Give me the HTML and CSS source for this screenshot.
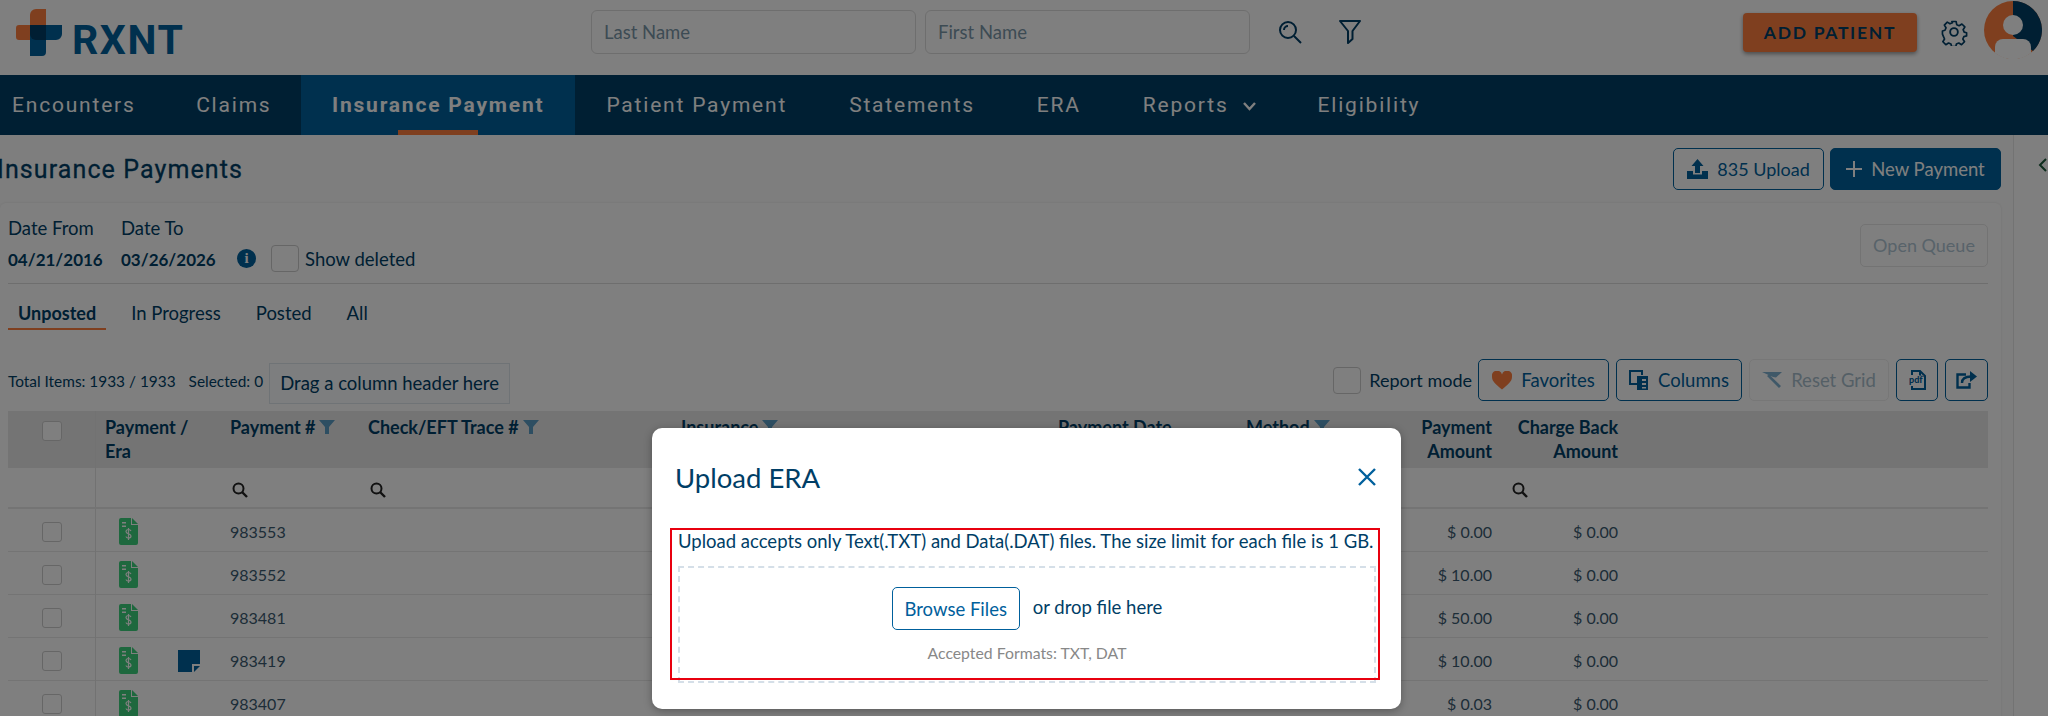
FILE: index.html
```html
<!DOCTYPE html>
<html lang="en">

<head>
    <meta name="viewport" content="width=device-width, initial-scale=1.0">
    <title>Insurance Payments</title>
    <link rel="stylesheet" href="styles.css">
</head>

<body>
    <svg class="defs" width="0" height="0">
        <symbol id="era-doc" viewBox="0 0 19 27">
            <path d="M2 0h10v7h7v18a2 2 0 0 1-2 2H2a2 2 0 0 1-2-2V2a2 2 0 0 1 2-2z" fill="#3dd07c" />
            <path d="M13 0l6 6h-6z" fill="#3dd07c" />
            <path d="M3 4h4v1.500H3zM3 7.500h4V9H3z" fill="#fff" />
            <path d="M12 13c-.5-1-1.500-1.500-2.500-1.500S7 12 7 13.500c0 3 5 1.800 5 4.600 0 1.400-1.200 2-2.500 2S7.200 19.500 7 18.500M9.500 10v12" fill="none" stroke="#fff" stroke-width="1.200" />
        </symbol>
        <symbol id="small-search" viewBox="0 0 16 16">
            <circle cx="6.500" cy="6.500" r="5" fill="none" stroke="#222" stroke-width="2" />
            <path d="M10 10l5 5" stroke="#222" stroke-width="2.400" />
        </symbol>
        <symbol id="col-filter" viewBox="0 0 16 14">
            <path d="M0 0h16L10 7v7H6V7z" fill="#5b9cc4" />
        </symbol>
    </svg>

    <div class="header">
        <div class="logo">
            <svg width="46" height="47" viewBox="0 0 46 47">
                <path d="M14 6a6 6 0 0 1 6-6h10v31H14V31H3a3 3 0 0 1-3-3v-9a3 3 0 0 1 3-3h11z" fill="#ff7f3f" />
                <path d="M14 16h32v9a6 6 0 0 1-6 6H30v12a4 4 0 0 1-4 4H14z" fill="#00609c" />
                <path d="M14 16h16v15H20a6 6 0 0 1-6-6z" fill="#003c66" />
            </svg>
            <span class="logo-text">RXNT</span>
        </div>
        <div class="patient-search">
            <input class="name-input" placeholder="Last Name">
            <input class="name-input" placeholder="First Name">
            <svg class="search-icon" width="24" height="24" viewBox="0 0 24 24" fill="none" stroke="#003e66" stroke-width="2">
                <circle cx="10" cy="10" r="8" />
                <path d="M16 16l7 7M6 10a4 4 0 0 1 4-4" />
            </svg>
            <svg class="filter-icon" width="22" height="24" viewBox="0 0 22 24" fill="none" stroke="#003e66" stroke-width="2">
                <path d="M1 1h20l-7.500 10v8L9 23V11z" stroke-linejoin="round" />
            </svg>
        </div>
        <button class="add-patient">ADD PATIENT</button>
        <svg class="gear" width="28" height="28" viewBox="0 0 24 24" fill="none" stroke="#003e66" stroke-width="1.600">
            <circle cx="12" cy="12" r="3.300" />
            <path d="M10 2h4l.6 3 2.300 1 2.600-1.600 2.800 2.800-1.600 2.600 1 2.300 2.300.6v3l-2.600.7-1 2.300 1.600 2.600-2.800 2.800-2.600-1.600-2.300 1-.6 2.400h-4l-.6-2.400-2.300-1-2.600 1.600-2.800-2.800 1.600-2.600-1-2.300L1 14v-3l2.400-.7 1-2.300-1.600-2.600 2.800-2.800 2.600 1.600 2.300-1z" transform="translate(1.200 1.200) scale(.9)" stroke-linejoin="round" />
        </svg>
        <svg class="avatar" width="58" height="58" viewBox="0 0 58 58">
            <circle cx="29" cy="29" r="29" fill="#ff7f3f" />
            <path d="M29 0a29 29 0 0 1 20 50L29 35z" fill="#003e66" />
            <circle cx="29" cy="24" r="10" fill="#fff" />
            <path d="M11 52V46a8 8 0 0 1 8-8h20a8 8 0 0 1 8 8v6a29 29 0 0 1-36 0z" fill="#fff" />
        </svg>
    </div>

    <div class="nav">
        <a class="nav-item">Encounters</a>
        <a class="nav-item">Claims</a>
        <a class="nav-item active">Insurance Payment</a>
        <a class="nav-item">Patient Payment</a>
        <a class="nav-item">Statements</a>
        <a class="nav-item">ERA</a>
        <a class="nav-item">Reports
            <svg class="nav-caret" width="13" height="9" viewBox="0 0 13 9" fill="none" stroke="#fff" stroke-width="2.400">
                <path d="M1 1l5.500 6L12 1" />
            </svg>
        </a>
        <a class="nav-item">Eligibility</a>
    </div>

    <div class="page">
        <div class="main">
            <div class="title-bar">
                <h1 class="page-title">Insurance Payments</h1>
                <button class="btn outline">
                    <svg width="21" height="20" viewBox="0 0 21 20" fill="#00609c">
                        <path d="M10.500 0l6 7h-3.500v7H8V7H4.500zM0 12h6v3.500h9V12h6v8H0z" />
                    </svg>
                    835 Upload
                </button>
                <button class="btn primary">
                    <svg width="16" height="16" viewBox="0 0 16 16" stroke="#fff" stroke-width="2">
                        <path d="M8 0v16M0 8h16" />
                    </svg>
                    New Payment
                </button>
            </div>

            <div class="panel">
                <div class="filters">
                    <div class="date-col from">
                        <div class="date-label">Date From</div>
                        <div class="date-value">04/21/2016</div>
                    </div>
                    <div class="date-col">
                        <div class="date-label">Date To</div>
                        <div class="date-value">03/26/2026</div>
                    </div>
                    <span class="info-dot">i</span>
                    <span class="check big"></span>
                    <span class="show-deleted">Show deleted</span>
                    <button class="open-queue">Open Queue</button>
                </div>

                <div class="tabs">
                    <div class="tab current">Unposted</div>
                    <div class="tab">In Progress</div>
                    <div class="tab">Posted</div>
                    <div class="tab">All</div>
                </div>

                <div class="toolbar">
                    <span class="count">Total Items: 1933 / 1933</span>
                    <span class="count selected">Selected: 0</span>
                    <div class="drag-box">Drag a column header here</div>
                    <span class="check big report"></span>
                    <span class="report-label">Report mode</span>
                    <button class="tool favorites">
                        <svg width="20" height="19" viewBox="0 0 20 18" fill="#ff7f3f">
                            <path d="M10 18C4 13 0 10 0 5.500A5 5 0 0 1 10 3a5 5 0 0 1 10 2.500C20 10 16 13 10 18z" />
                        </svg>
                        Favorites
                    </button>
                    <button class="tool columns">
                        <svg width="20" height="20" viewBox="0 0 20 20">
                            <path d="M8 14H1V1h12v4" fill="none" stroke="#00609c" stroke-width="2" />
                            <path d="M8 6h11v14H8zM13 9v2h4V9zm0 4v2h4v-2zm0 4v1.500h4V17z" fill="#00609c" fill-rule="evenodd" />
                        </svg>
                        Columns
                    </button>
                    <button class="tool reset disabled">
                        <svg width="20" height="16" viewBox="0 0 20 16" fill="#7fb0d0">
                            <path d="M0 0h20l-6 5.500-3-.5zM5 4l2-1.500L19 14l-2 2z" />
                        </svg>
                        Reset Grid
                    </button>
                    <button class="tool square pdf">
                        <svg width="17" height="20" viewBox="0 0 17 20" fill="none" stroke="#00609c" stroke-width="2">
                            <path d="M3 5V1h8l5 5v13H3v-3M11 1v5h5" />
                            <text x="0" y="13" class="pdf-label">pdf</text>
                        </svg>
                    </button>
                    <button class="tool square">
                        <svg width="21" height="18" viewBox="0 0 21 18" fill="none" stroke="#00609c" stroke-width="2.400">
                            <path d="M10 3.500H1.500v13h12V12M6 12c0-4 3-6.500 9-6.500" />
                            <path d="M14 0l7 5.500-7 5.500z" fill="#00609c" stroke="none" />
                        </svg>
                    </button>
                </div>

                <div class="grid">
                    <div class="row head">
                        <div class="cell check-cell"><span class="check"></span></div>
                        <div class="cell">Payment /<br>Era</div>
                        <div class="cell">Payment #<svg class="col-icon"><use href="#col-filter" /></svg></div>
                        <div class="cell">Check/EFT Trace #<svg class="col-icon"><use href="#col-filter" /></svg></div>
                        <div class="cell">Insurance<svg class="col-icon"><use href="#col-filter" /></svg></div>
                        <div class="cell">Payment Date</div>
                        <div class="cell">Method<svg class="col-icon"><use href="#col-filter" /></svg></div>
                        <div class="cell num">Payment<br>Amount</div>
                        <div class="cell num">Charge Back<br>Amount</div>
                        <div class="cell"></div>
                    </div>
                    <div class="row search">
                        <div class="cell check-cell"></div>
                        <div class="cell"></div>
                        <div class="cell"><svg class="mini"><use href="#small-search" /></svg></div>
                        <div class="cell"><svg class="mini"><use href="#small-search" /></svg></div>
                        <div class="cell"></div>
                        <div class="cell"></div>
                        <div class="cell"></div>
                        <div class="cell"></div>
                        <div class="cell"><svg class="mini"><use href="#small-search" /></svg></div>
                        <div class="cell"></div>
                    </div>
                    <div class="row">
                        <div class="cell check-cell"><span class="check"></span></div>
                        <div class="cell doc-cell"><svg class="doc"><use href="#era-doc" /></svg></div>
                        <div class="cell">983553</div>
                        <div class="cell"></div>
                        <div class="cell"></div>
                        <div class="cell"></div>
                        <div class="cell"></div>
                        <div class="cell num">$ 0.00</div>
                        <div class="cell num">$ 0.00</div>
                        <div class="cell"></div>
                    </div>
                    <div class="row">
                        <div class="cell check-cell"><span class="check"></span></div>
                        <div class="cell doc-cell"><svg class="doc"><use href="#era-doc" /></svg></div>
                        <div class="cell">983552</div>
                        <div class="cell"></div>
                        <div class="cell"></div>
                        <div class="cell"></div>
                        <div class="cell"></div>
                        <div class="cell num">$ 10.00</div>
                        <div class="cell num">$ 0.00</div>
                        <div class="cell"></div>
                    </div>
                    <div class="row">
                        <div class="cell check-cell"><span class="check"></span></div>
                        <div class="cell doc-cell"><svg class="doc"><use href="#era-doc" /></svg></div>
                        <div class="cell">983481</div>
                        <div class="cell"></div>
                        <div class="cell"></div>
                        <div class="cell"></div>
                        <div class="cell"></div>
                        <div class="cell num">$ 50.00</div>
                        <div class="cell num">$ 0.00</div>
                        <div class="cell"></div>
                    </div>
                    <div class="row">
                        <div class="cell check-cell"><span class="check"></span></div>
                        <div class="cell doc-cell">
                            <svg class="doc"><use href="#era-doc" /></svg>
                            <svg class="note" width="22" height="22" viewBox="0 0 22 22" fill="#00609c">
                                <path d="M0 0h22v14h-8v8H0z" />
                                <path d="M16 16h6l-6 6z" />
                            </svg>
                        </div>
                        <div class="cell">983419</div>
                        <div class="cell"></div>
                        <div class="cell"></div>
                        <div class="cell"></div>
                        <div class="cell"></div>
                        <div class="cell num">$ 10.00</div>
                        <div class="cell num">$ 0.00</div>
                        <div class="cell"></div>
                    </div>
                    <div class="row">
                        <div class="cell check-cell"><span class="check"></span></div>
                        <div class="cell doc-cell"><svg class="doc"><use href="#era-doc" /></svg></div>
                        <div class="cell">983407</div>
                        <div class="cell"></div>
                        <div class="cell"></div>
                        <div class="cell"></div>
                        <div class="cell"></div>
                        <div class="cell num">$ 0.03</div>
                        <div class="cell num">$ 0.00</div>
                        <div class="cell"></div>
                    </div>
                </div>
            </div>
        </div>
        <div class="side">
            <svg width="9" height="14" viewBox="0 0 9 14" fill="none" stroke="#1a5a3a" stroke-width="2">
                <path d="M8 1L2 7l6 6" />
            </svg>
        </div>
    </div>

    <!-- modal sits over the dimmed page -->
    <div class="overlay"></div>
    <div class="modal">
        <div class="modal-head">
            <div class="modal-title">Upload ERA</div>
            <svg width="18" height="18" viewBox="0 0 18 18" stroke="#00609c" stroke-width="2.400">
                <path d="M1 1l16 16M17 1L1 17" />
            </svg>
        </div>
        <div class="upload-note">Upload accepts only Text(.TXT) and Data(.DAT) files. The size limit for each file is 1 GB.</div>
        <div class="drop-zone">
            <div class="drop-line">
                <button class="browse">Browse Files</button>
                <span class="drop-text">or drop file here</span>
            </div>
            <div class="formats">Accepted Formats: TXT, DAT</div>
        </div>
        <div class="red-box"></div>
    </div>
</body>

</html>
```
FILE: styles.css
```css
* {
    box-sizing: border-box;
}

html,
body {
    margin: 0;
    height: 716px;
    overflow: hidden;
}

body {
    position: relative;
    font-family: Lato, sans-serif;
    font-size: 18.5px;
    color: #003e66;
    background: #fff;
}

button {
    font-family: Lato, sans-serif;
    cursor: pointer;
}

.defs {
    position: absolute;
}

/* top bar */
.header {
    display: flex;
    align-items: center;
    height: 75px;
    padding: 0 6px 11px 0;
}

.logo {
    display: flex;
    align-items: center;
    width: 591px;
    padding-left: 16px;
}

.logo-text {
    margin-left: 10px;
    margin-top: 15px;
    font-family: Roboto, sans-serif;
    font-size: 41px;
    line-height: 32px;
    font-weight: 700;
    letter-spacing: 1.6px;
    color: #00609c;
}

.patient-search {
    display: flex;
    align-items: center;
    gap: 9px;
}

.name-input {
    width: 325px;
    height: 44px;
    padding: 0 12px;
    font-family: Lato, sans-serif;
    font-size: 18.5px;
    border: 1px solid #ddd;
    border-radius: 6px;
    background: #fff;
}

.name-input::placeholder {
    color: #7b97a9;
}

.search-icon {
    margin-left: 19px;
}

.filter-icon {
    margin-left: 28px;
}

.add-patient {
    margin-left: auto;
    width: 174px;
    height: 39px;
    font-size: 17.5px;
    font-weight: 700;
    letter-spacing: 1.7px;
    color: #003e66;
    background: #ff7f3f;
    border: 0;
    border-radius: 4px;
    box-shadow: 0 2px 4px rgba(0, 0, 0, 0.4);
}

.gear {
    margin-left: 23px;
}

.avatar {
    margin-left: 16px;
    margin-top: -4px;
}

/* main nav */
.nav {
    display: flex;
    height: 60px;
    margin-left: -19px;
    background: #003e66;
}

.nav-item {
    display: flex;
    align-items: center;
    gap: 14px;
    position: relative;
    padding: 0 31px;
    font-family: Roboto, sans-serif;
    font-size: 21px;
    letter-spacing: 1.8px;
    color: #fff;
}

.nav-item:nth-child(-n+2) {
    padding-right: 29.5px;
}

.nav-item.active {
    background: #00609c;
    font-weight: 700;
}

.nav-item.active::after {
    content: "";
    position: absolute;
    left: 97px;
    bottom: 0;
    width: 80px;
    height: 5px;
    background: #ff7f3f;
}

.nav-caret {
    margin-top: 2px;
}

/* page */
.page {
    display: flex;
}

.main {
    width: 2013px;
    padding-right: 12px;
    overflow: hidden;
    background: #fdfdfd;
}

.side {
    flex: 1;
    padding: 23px 0 0 24px;
    border-left: 1px solid #e6e6e6;
}

.side svg {
    display: block;
}

.title-bar {
    display: flex;
    align-items: center;
    gap: 6px;
    height: 68px;
}

.page-title {
    margin: 0 auto 0 -3px;
    font-family: Roboto, sans-serif;
    font-size: 25px;
    font-weight: 400;
    letter-spacing: 1.1px;
    -webkit-text-stroke: 0.3px #003e66;
    color: #003e66;
}

.btn {
    display: flex;
    align-items: center;
    justify-content: center;
    gap: 9px;
    height: 42px;
    border-radius: 5px;
}

.btn.outline {
    width: 151px;
    font-size: 18px;
    color: #00609c;
    background: #fff;
    border: 1px solid #00609c;
}

.btn.primary {
    width: 171px;
    font-size: 18.5px;
    color: #fff;
    background: #00609c;
    border: 1px solid #00609c;
}

.panel {
    padding: 0 13px 0 8px;
    background: #fff;
    border-radius: 6px 6px 0 0;
    box-shadow: 0 0 3px rgba(0, 0, 0, 0.1);
}

.filters {
    display: flex;
    align-items: center;
    height: 81px;
    padding-top: 14px;
    padding-bottom: 8px;
    border-bottom: 1px solid #ddd;
}

.date-col {
    width: 113px;
}

.date-label {
    height: 22px;
    line-height: 22px;
}

.date-value {
    height: 32px;
    line-height: 32px;
    margin-top: 5px;
    font-size: 17px;
    font-weight: 700;
}

.info-dot {
    display: inline-block;
    width: 19px;
    height: 19px;
    margin: 25px 0 0 3px;
    line-height: 19px;
    text-align: center;
    font-family: "Liberation Serif", serif;
    font-size: 15px;
    font-weight: 700;
    color: #fff;
    background: #00609c;
    border-radius: 50%;
}

.check {
    display: inline-block;
    width: 20px;
    height: 20px;
    background: #fff;
    border: 1px solid #ccc;
    border-radius: 3px;
}

.check.big {
    width: 28px;
    height: 27px;
    margin: 25px 0 0 15px;
    border-radius: 4px;
}

.show-deleted {
    margin: 25px 0 0 6px;
}

.open-queue {
    width: 128px;
    height: 43px;
    margin: -2px 0 0 auto;
    font-size: 18px;
    color: #b0c6d4;
    background: #fff;
    border: 1px solid #e6e6e6;
    border-radius: 5px;
}

.tabs {
    display: flex;
    gap: 15px;
    margin-top: 12px;
}

.tab {
    height: 34px;
    padding: 5px 10px 0;
    line-height: 24px;
}

.tab.current {
    font-size: 18px;
    font-weight: 700;
    border-bottom: 2px solid #ff7f3f;
}

.toolbar {
    display: flex;
    align-items: flex-start;
    height: 45px;
    margin: 29px 0 7px;
}

.count {
    margin-top: 12px;
    font-size: 15.4px;
    line-height: 20px;
}

.selected {
    margin-left: 13px;
}

.drag-box {
    width: 241px;
    height: 41px;
    margin: 4px 0 0 6px;
    line-height: 39px;
    text-align: center;
    background: #fafcfe;
    border: 1px solid #dfe6ec;
}

.check.report {
    margin: 8px 0 0 auto;
}

.report-label {
    margin: 10px 6px 0 8px;
    font-size: 18px;
}

.tool {
    display: flex;
    align-items: center;
    justify-content: center;
    gap: 9px;
    height: 42px;
    margin-left: 7px;
    padding: 0;
    font-size: 18.5px;
    color: #00609c;
    background: #fff;
    border: 1px solid #00609c;
    border-radius: 5px;
}

.tool.favorites {
    width: 131px;
    margin-left: 0;
}

.tool.columns {
    width: 126px;
}

.tool.reset {
    width: 140px;
}

.tool.disabled {
    color: #a9bfcd;
    border-color: #eee;
}

.tool.square {
    width: 43px;
}

.tool.pdf {
    width: 42px;
}

.pdf-label {
    font-size: 9px;
    font-weight: 900;
    fill: #00609c;
    stroke: #fff;
    stroke-width: 1.5px;
    paint-order: stroke;
}

/* grid */
.row {
    display: grid;
    grid-template-columns: 88px 125px 138px 313px 377px 188px 163px 101px 126px 1fr;
    height: 43px;
    font-size: 16px;
    line-height: 45px;
    color: #3a5a70;
    border-bottom: 1px solid #e8e8e8;
}

.cell {
    padding: 0 9px;
    min-width: 0;
}

.cell.num {
    text-align: right;
}

.check-cell {
    display: flex;
    align-items: center;
    justify-content: center;
    border-right: 1px solid #e4e4e4;
}

.row.head {
    height: 57px;
    font-size: 18px;
    font-weight: 700;
    line-height: 24px;
    color: #003e66;
    background: #e9e9e9;
    border: 0;
}

.row.head .cell {
    padding-top: 4px;
    white-space: nowrap;
}

.row.head .check-cell {
    padding-top: 0;
    padding-bottom: 18px;
}

.row.search {
    height: 41px;
    border-bottom-width: 2px;
}

.mini {
    width: 16px;
    height: 16px;
    margin: 14px 0 0 2px;
    display: block;
}

.col-icon {
    width: 16px;
    height: 14px;
    margin-left: 4px;
}

.doc-cell {
    display: flex;
    align-items: center;
    padding: 0 0 0 23px;
}

.doc {
    width: 19px;
    height: 27px;
}

.note {
    margin-left: 40px;
}

/* modal */
.overlay {
    position: absolute;
    inset: 0;
    background: rgba(0, 0, 0, 0.5);
}

.modal {
    position: absolute;
    left: 652px;
    top: 428px;
    width: 749px;
    height: 281px;
    padding: 0 25px 0 26px;
    background: #fff;
    border-radius: 10px;
    box-shadow: 0 2px 8px rgba(0, 0, 0, 0.3);
}

.modal-head {
    display: flex;
    align-items: center;
    justify-content: space-between;
    height: 98px;
}

.modal-title {
    margin-left: -3px;
    font-size: 27.5px;
}

.upload-note {
    height: 40px;
    line-height: 30px;
    white-space: nowrap;
}

.drop-zone {
    height: 117px;
    border: 2px dashed #d5dfe8;
    text-align: center;
}

.drop-line {
    display: flex;
    align-items: center;
    justify-content: center;
    gap: 13px;
    padding-top: 19px;
}

.drop-text {
    margin-top: -3px;
}

.browse {
    width: 128px;
    height: 43px;
    font-size: 18.5px;
    color: #00609c;
    background: #fff;
    border: 1px solid #00609c;
    border-radius: 5px;
}

.formats {
    margin-top: 13px;
    font-size: 15.8px;
    line-height: 20px;
    color: #888;
}

.red-box {
    position: absolute;
    left: 18px;
    top: 100px;
    width: 710px;
    height: 152px;
    border: 2px solid #e8000f;
}
```
